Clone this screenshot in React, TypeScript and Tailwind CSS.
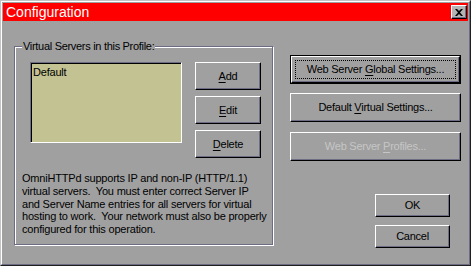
import React from 'react'

const font = "font-['Liberation_Sans',Arial,sans-serif]"

function Btn({ children, className = '', disabled = false }: { children: React.ReactNode; className?: string; disabled?: boolean }) {
  return (
    <div
      className={`flex items-center justify-center bg-[#a0a0a0] border border-t-white border-l-white border-b-black border-r-black shadow-[inset_-1px_-1px_0_#6c6c84] text-[11px] tracking-[-0.25px] ${disabled ? 'text-[#c6c6c6]' : 'text-black'} ${className}`}
    >
      {children}
    </div>
  )
}

function U({ children }: { children: React.ReactNode }) {
  return <span className="underline underline-offset-[2px]">{children}</span>
}

export default function App() {
  return (
    <div className={`w-[471px] h-[266px] border border-t-[#c4c4c4] border-l-[#c4c4c4] border-b-[#202020] border-r-[#202020] ${font}`}>
      <div className="h-full flex flex-col p-[1px] bg-[#a0a0a0] border border-t-white border-l-white border-b-[#6c6c84] border-r-[#6c6c84]">
        {/* title bar */}
        <div className="h-[18px] bg-[#ff0000] flex items-center justify-between pl-[3px] pr-[1px]">
          <span className="text-white text-[14px] leading-none">Configuration</span>
          <div className="w-[16px] h-[14px] bg-[#b4b4b4] border border-t-white border-l-white border-b-black border-r-black shadow-[inset_-1px_-1px_0_#6c6c84] flex items-center justify-center">
            <svg width="8" height="7" viewBox="0 0 8 7">
              <path d="M0 0h2l2 2 2-2h2L5 3.5 8 7H6L4 5 2 7H0l3-3.5z" fill="#000" />
            </svg>
          </div>
        </div>

        {/* body */}
        <div className="flex flex-row pl-[11px] pt-[25px]">
          {/* group box */}
          <div className="relative w-[259px] h-[199px] border border-[#6c6c84] shadow-[1px_1px_0_#fff,inset_1px_1px_0_#fff] pl-[15px] pt-[15px]">
            <span className="absolute left-[7px] -top-[8px] px-[1px] bg-[#a0a0a0] text-[11px] tracking-[-0.3px] leading-[14px] text-black">
              Virtual Servers in this Profile:
            </span>
            <div className="flex flex-row gap-[13px]">
              <div className="w-[152px] h-[81px] bg-[#c2c292] border border-t-[#6c6c84] border-l-[#6c6c84] border-b-white border-r-white shadow-[inset_1px_1px_0_#000] px-[2px] pt-[2px]">
                <div className="text-[11px] tracking-[-0.2px] leading-[14px] text-black">Default</div>
              </div>
              <div className="flex flex-col gap-[6px]">
                <Btn className="w-[66px] h-[28px]"><span><U>A</U>dd</span></Btn>
                <Btn className="w-[66px] h-[28px]"><span><U>E</U>dit</span></Btn>
                <Btn className="w-[66px] h-[28px]"><span><U>D</U>elete</span></Btn>
              </div>
            </div>
            <p className="mt-[14px] ml-[-8px] text-[11px] tracking-[-0.2px] leading-[12.75px] text-black whitespace-nowrap">
              OmniHTTPd supports IP and non-IP (HTTP/1.1)<br />
              virtual servers.&nbsp; You must enter correct Server IP<br />
              and Server Name entries for all servers for virtual<br />
              hosting to work.&nbsp; Your network must also be properly<br />
              configured for this operation.
            </p>
          </div>

          {/* right column */}
          <div className="ml-[17px] pt-[9px] flex flex-col">
            <div className="w-[171px] h-[29px] border border-black">
              <div className="w-full h-full p-[3px] bg-[#a0a0a0] border border-t-white border-l-white border-b-black border-r-black shadow-[inset_-1px_-1px_0_#6c6c84]">
                <div className="w-full h-full border border-dotted border-black flex items-center justify-center text-[11px] tracking-[-0.25px] text-black">
                  <span>Web Server <U>G</U>lobal Settings...</span>
                </div>
              </div>
            </div>
            <Btn className="w-[171px] h-[29px] mt-[9px]"><span>Default <U>V</U>irtual Settings...</span></Btn>
            <Btn className="w-[171px] h-[29px] mt-[10px]" disabled><span>Web Server <U>P</U>rofiles...</span></Btn>
            <Btn className="w-[75px] h-[23px] mt-[33px] ml-[85px]"><span>OK</span></Btn>
            <Btn className="w-[75px] h-[23px] mt-[8px] ml-[85px]"><span>Cancel</span></Btn>
          </div>
        </div>
      </div>
    </div>
  )
}
